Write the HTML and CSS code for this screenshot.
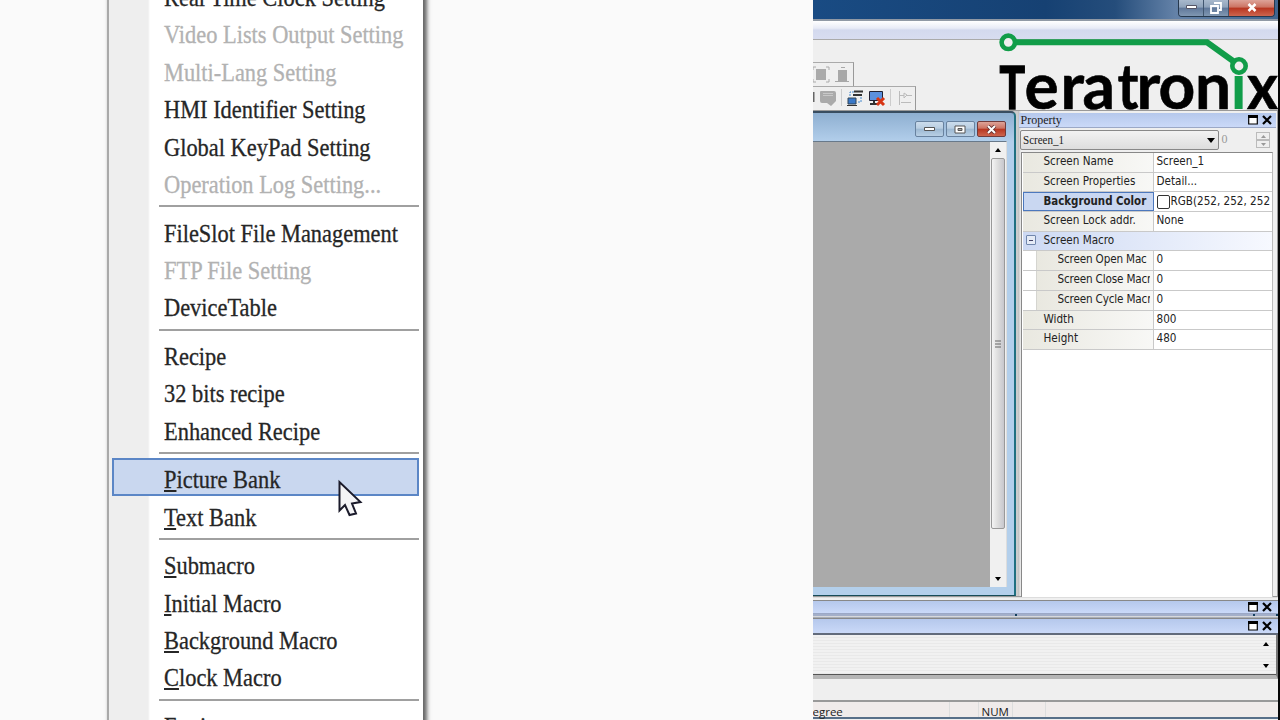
FILE: index.html
```html
<!DOCTYPE html>
<html lang="en">
<head>
    <meta charset="UTF-8">
    <title>Teratronix - Picture Bank</title>
    <link rel="stylesheet" href="styles.css">
</head>
<body>
    <!-- Icons used more than once -->
    <svg class="defs">
        <symbol id="restore" viewBox="0 0 10 10"><path d="M.7 1h8.6v8H.7z" fill="#fff" stroke="#000" stroke-width="1.2"/><path d="M0 0h10v3H0z"/></symbol>
        <symbol id="close" viewBox="0 0 10 10"><path d="M1 1l8 8M9 1L1 9" stroke="#000" stroke-width="2.2"/></symbol>
        <symbol id="up" viewBox="0 0 6 4"><path d="M0 4l3-4 3 4z"/></symbol>
        <symbol id="down" viewBox="0 0 6 4"><path d="M0 0l3 4 3-4z"/></symbol>
    </svg>

    <div class="zoom-area">
        <div class="menu">
            <div class="item"><span>Real Time Clock Setting</span></div>
            <div class="item disabled"><span>Video Lists Output Setting</span></div>
            <div class="item disabled"><span>Multi-Lang Setting</span></div>
            <div class="item"><span>HMI Identifier Setting</span></div>
            <div class="item"><span>Global KeyPad Setting</span></div>
            <div class="item disabled"><span>Operation Log Setting...</span></div>
            <div class="separator"></div>
            <div class="item"><span>FileSlot File Management</span></div>
            <div class="item disabled"><span>FTP File Setting</span></div>
            <div class="item"><span>DeviceTable</span></div>
            <div class="separator"></div>
            <div class="item"><span>Recipe</span></div>
            <div class="item"><span>32 bits recipe</span></div>
            <div class="item"><span>Enhanced Recipe</span></div>
            <div class="separator"></div>
            <div class="item selected"><span><u>P</u>icture Bank</span></div>
            <div class="item"><span><u>T</u>ext Bank</span></div>
            <div class="separator"></div>
            <div class="item"><span><u>S</u>ubmacro</span></div>
            <div class="item"><span><u>I</u>nitial Macro</span></div>
            <div class="item"><span><u>B</u>ackground Macro</span></div>
            <div class="item"><span><u>C</u>lock Macro</span></div>
            <div class="separator"></div>
            <div class="item"><span>Environment</span></div>
        </div>
        <svg class="cursor" width="27" height="40" viewBox="0 0 27 40">
            <path d="M2.500 3v28.500l5.500-5.500 4.500 10 6.500-1.500-4-10 8.500-1.500z" fill="#f4f4f6" stroke="#1b1b2b" stroke-width="2"/>
        </svg>
    </div>

    <div class="app">
        <div class="titlebar">
            <div class="window-buttons">
                <span><svg width="11" height="5"><path d="M.5.500h10v3H.5z" fill="#fff" stroke="#556"/></svg></span>
                <span><svg width="12" height="12"><path d="M4 1h7v7H9M1 4h7v7H1z" fill="none" stroke="#fff" stroke-width="1.800"/></svg></span>
                <span class="red"><svg width="10" height="9"><path d="M1.500 1l7 7M8.500 1l-7 7" stroke="#fff" stroke-width="2.500"/></svg></span>
            </div>
        </div>
        <div class="menubar"></div>
        <div class="toolbars">
            <div class="toolbar view-tools">
                <svg width="36" height="20">
                    <path d="M3 5h10v11H3z" fill="#aaa"/><path d="M0 6V3h3M13 3h3v3M0 15v3h3M13 18h3v-3" fill="none" stroke="#aaa"/>
                    <path d="M25 6h9v11h-9z" fill="#a8a8a8"/><path d="M22 17.500h15M28 3.500h4" stroke="#a8a8a8"/>
                </svg>
            </div>
            <div class="toolbar build-tools">
                <svg width="100" height="20">
                    <path d="M0 4h1.500v10H0z" fill="#666"/>
                    <path d="M7 4q0-1 1-1h13q2 0 2 2v8l-5 5-4-3H9q-2 0-2-2z" fill="#aaa"/><path d="M10 5.500h10M10 7.500h10" stroke="#c8c8c8"/>
                    <path d="M28.500 1v17M77.500 1v17" stroke="#ccc"/>
                    <path d="M41 3.500h9M40 7h9" stroke="#333" stroke-width="2"/><path d="M37 8V4h4M45 14h3V9" fill="none" stroke="#48c" stroke-dasharray="2 1"/>
                    <path d="M35 10h8v6h-8z" fill="#3978c8" stroke="#345"/><path d="M34 17.500h10" stroke="#333"/>
                    <path d="M56.500 3.500h13v9h-13z" fill="#5c91df" stroke="#223"/><path d="M57 16h9M61 13v3" stroke="#333" stroke-width="2"/><path d="M64 10l7 7M71 10l-7 7" stroke="#d73514" stroke-width="3"/>
                    <path d="M86.500 3v14M87 7.500h4M94 7.500h5M88 14.500h10M91 5v5l3-3z" fill="none" stroke="#bbb"/>
                </svg>
            </div>
        </div>

        <div class="workspace">
            <div class="child">
                <div class="child-title">
                    <span><svg width="11" height="5"><path d="M.5.500h10v3H.5z" fill="#fff" stroke="#555"/></svg></span>
                    <span><svg width="12" height="9"><path d="M1 1h10v7H1z" fill="#fff" stroke="#555"/><path d="M4 3.500h4v2H4z" fill="#aaa" stroke="#555"/></svg></span>
                    <span class="red"><svg width="11" height="9"><path d="M2 1l7 7M9 1L2 8" stroke="#633" stroke-width="3.800"/><path d="M2 1l7 7M9 1L2 8" stroke="#fff" stroke-width="2"/></svg></span>
                </div>
                <div class="child-body">
                    <div class="canvas"></div>
                    <div class="scrollbar">
                        <svg width="6" height="4"><use href="#up"/></svg>
                        <div class="thumb"><svg width="6" height="8"><path d="M0 1h6M0 4h6M0 7h6" stroke="#666"/></svg></div>
                        <svg width="6" height="4"><use href="#down"/></svg>
                    </div>
                </div>
            </div>

            <div class="property">
                <div class="caption">
                    <span>Property</span>
                    <svg width="10" height="10"><use href="#restore"/></svg>
                    <svg width="10" height="10"><use href="#close"/></svg>
                </div>
                <div class="selector">
                    <div class="combo"><span>Screen_1</span><svg width="8" height="5" viewBox="0 0 6 4" preserveAspectRatio="none"><path d="M0 0l3 4 3-4z"/></svg></div>
                    <div class="count">0</div>
                    <div class="spin">
                        <span><svg width="5" height="3"><path d="M0 3l2.500-3L5 3z" fill="#999"/></svg></span>
                        <span><svg width="5" height="3"><path d="M0 0l2.500 3L5 0z" fill="#999"/></svg></span>
                    </div>
                </div>
                <div class="grid">
                    <div class="row"><label>Screen Name</label><div>Screen_1</div></div>
                    <div class="row"><label>Screen Properties</label><div>Detail...</div></div>
                    <div class="row active"><label>Background Color</label><div><i class="swatch"></i>RGB(252, 252, 252</div></div>
                    <div class="row"><label>Screen Lock addr.</label><div>None</div></div>
                    <div class="row group"><i class="minus"></i>Screen Macro</div>
                    <div class="row sub"><label><span>Screen Open Mac</span></label><div>0</div></div>
                    <div class="row sub"><label><span>Screen Close Macr</span></label><div>0</div></div>
                    <div class="row sub"><label><span>Screen Cycle Macr</span></label><div>0</div></div>
                    <div class="row"><label>Width</label><div>800</div></div>
                    <div class="row"><label>Height</label><div>480</div></div>
                </div>
            </div>
        </div>

        <div class="dock">
            <div class="caption dock-caption">
                <svg width="10" height="10"><use href="#restore"/></svg>
                <svg width="10" height="10"><use href="#close"/></svg>
            </div>
            <div class="splitter"><i></i><i></i><i></i></div>
            <div class="caption dock-caption output-caption">
                <svg width="10" height="10"><use href="#restore"/></svg>
                <svg width="10" height="10"><use href="#close"/></svg>
            </div>
            <div class="output">
                <svg width="6" height="4"><use href="#up"/></svg>
                <svg width="6" height="4"><use href="#down"/></svg>
            </div>
        </div>
        <div class="statusbar">
            <span class="degree">egree</span><span></span><span class="num">NUM</span><span class="gap"></span>
        </div>

        <svg class="logo" width="280" height="80" viewBox="1000 30 280 80">
            <text y="109" x="999.5 1024.500 1060.500 1082.500 1117.500 1136.500 1158.500 1195 1230.500 1247"><tspan class="cap" textLength="25.500" lengthAdjust="spacingAndGlyphs">T</tspan>era<tspan textLength="21" lengthAdjust="spacingAndGlyphs">t</tspan>ron<tspan class="green">i</tspan><tspan textLength="31" lengthAdjust="spacingAndGlyphs">x</tspan></text>
            <path d="M1008 42.300h199l32 23" fill="none" stroke="#119d49" stroke-width="6"/>
            <circle cx="1008.300" cy="42.300" r="6.700"/>
            <circle cx="1239" cy="66" r="6.700"/>
        </svg>
    </div>
</body>
</html>
```

FILE: styles.css
```css
* {
    box-sizing: border-box;
}
body {
    margin: 0;
    width: 1280px;
    height: 720px;
    overflow: hidden;
    display: flex;
    background: #fafafa;
    font-family: "DejaVu Sans Condensed", "DejaVu Sans", sans-serif;
    color: #222;
}
svg {
    display: block;
    flex: none;
}
.defs {
    position: absolute;
    width: 0;
    height: 0;
}

/* Enlarged menu */
.zoom-area {
    position: relative;
    width: 812.5px;
    height: 720px;
    flex: none;
    overflow: hidden;
    padding-left: 107px;
}
.menu {
    width: 316px;
    height: 760px;
    margin-top: -24px;
    padding: 0 4px 0 4px;
    border-left: 2px solid #a9a9a9;
    background: linear-gradient(90deg, #eee 39px, #fff 41px);
    box-shadow: 3px 0 4px 1px #666;
}
.item {
    height: 37.4px;
    padding-left: 51px;
    font: 25px/43px "Liberation Serif", serif;
    white-space: nowrap;
    color: #262626;
}
.item span {
    display: inline-block;
    transform: scaleX(.896);
    transform-origin: left;
    -webkit-text-stroke: .3px;
}
.item u {
    text-decoration-thickness: 2px;
    text-underline-offset: 2px;
}
.disabled {
    color: #b2b2b2;
}
.selected {
    margin-left: -1px;
    padding-left: 50px;
    border: 2px solid #5b86c6;
    background: #c9d7ef;
    line-height: 39px;
}
.separator {
    height: 11.2px;
    margin-left: 46px;
    background: linear-gradient(#a0a0a0, #a0a0a0) 0 5px / 100% 2px no-repeat;
}
.cursor {
    position: absolute;
    left: 337px;
    top: 479px;
}

/* Application */
.app {
    position: relative;
    flex: 1;
    height: 720px;
    display: flex;
    flex-direction: column;
    border-right: 2.5px solid #050505;
    background: #efefef;
    overflow: hidden;
}
.titlebar {
    height: 19px;
    flex: none;
    display: flex;
    justify-content: flex-end;
    padding-right: 3px;
    background: linear-gradient(90deg, #194b83, #164173 50%, #254d7b 65%, #6482a8 78%, #40658f);
}
.window-buttons {
    display: flex;
    height: 17px;
    border: 1px solid #27394e;
    border-top: 0;
    border-radius: 0 0 4px 4px;
    overflow: hidden;
}
.window-buttons span, .child-title span {
    display: flex;
    align-items: center;
    justify-content: center;
    background: linear-gradient(#a8b9cd, #8fa3bb 45%, #60789a 50%, #8097b2);
}
.window-buttons span {
    width: 25px;
    padding-bottom: 1px;
    border-right: 1px solid #41566f;
}
.window-buttons .red {
    width: 45px;
    border: 0;
}
.window-buttons .red, .child-title .red {
    background: linear-gradient(#dda398, #cc7362 45%, #b73520 50%, #cd654e);
}
.menubar {
    height: 21px;
    flex: none;
    border-top: 2px solid #9099a5;
    border-bottom: 1px solid #aaa;
    background: linear-gradient(#fff, #e8ebf6 40%, #d3d9ee 50%, #d8ddf0);
}
.toolbars {
    height: 71px;
    flex: none;
    padding-top: 22px;
    border-bottom: 1px solid #999;
}
.toolbar {
    height: 24px;
    border-top: 1px solid #aaa;
    border-right: 1px solid #999;
    padding-top: 1px;
}
.view-tools {
    width: 41px;
}
.build-tools {
    width: 103px;
}
.workspace {
    height: 486px;
    flex: none;
    display: flex;
    border-bottom: 1px solid #999;
    background: #ccc;
}
.child {
    width: 203px;
    height: 485px;
    padding: 0 7px 8px 0;
    border-right: 2px solid #207080;
    border-bottom: 1px solid #164b58;
    border-top: 2px solid #394d60;
    border-top-right-radius: 5px;
    background: linear-gradient(#8eafd1, #b3cfeb 29px, #b3cfeb);
}
.child-title {
    height: 28px;
    display: flex;
    justify-content: flex-end;
    gap: 2px;
    padding: 8px 1px 4px 0;
}
.child-title span {
    width: 29px;
    border: 1px solid #68829f;
    border-radius: 2px;
    background: linear-gradient(#cbdcec, #b9cee2 45%, #9cb8d2 50%, #b8cfe4);
}
.child-title .red {
    border-color: #713b3b;
}
.child-body {
    height: 446px;
    display: flex;
    border-top: 1px solid #68798a;
    border-right: 1px solid #ddd;
}
.canvas {
    flex: 1;
    background: #aaa;
}
.scrollbar {
    width: 16px;
    display: flex;
    flex-direction: column;
    align-items: center;
    justify-content: space-between;
    padding: 6px 0 6px;
    background: #f0f0f0;
}
.thumb {
    width: 14px;
    height: 371px;
    margin-bottom: 42px;
    display: flex;
    align-items: center;
    justify-content: center;
    border: 1px solid #999;
    border-radius: 2px;
    background: linear-gradient(90deg, #f4f4f4, #ddd 50%, #c7c7cd);
}

/* Property panel */
.property {
    flex: 1;
    min-width: 0;
    margin-left: 2px;
    padding: 2px 4px 0 3px;
    background: linear-gradient(90deg, #bbb, #efefef 3px);
    border-right: 1px solid #999;
}
.caption {
    height: 15px;
    margin: 0 -3px 0 -2px;
    padding-right: 4px;
    display: flex;
    align-items: center;
    gap: 4px;
    border-bottom: 1px solid #9ba8c6;
    background: linear-gradient(#b5c8ec, #cad9f8);
}
.caption span {
    flex: 1;
    padding-left: 2px;
    font: 12px/14px "Liberation Serif", serif;
}
.selector {
    height: 24px;
    padding-top: 2px;
    display: flex;
    font: 12px/18px "Liberation Serif", serif;
}
.combo {
    width: 199px;
    height: 20px;
    margin-left: -1px;
    padding: 0 3px 0 2px;
    display: flex;
    align-items: center;
    border: 1px solid #888;
    border-radius: 2px;
    background: linear-gradient(#f2f2f2, #ddd);
}
.combo span {
    flex: 1;
    transform: scaleX(.92);
    transform-origin: left;
}
.count {
    flex: 1;
    padding-left: 3px;
    color: #999;
}
.spin {
    width: 14px;
    margin: 2px 3px 4px 0;
}
.spin span {
    height: 8px;
    display: flex;
    align-items: center;
    justify-content: center;
    border: 1px solid #bbb;
}
.grid {
    height: 446px;
    padding-left: 1px;
    border-top: 1px solid #888;
    border-left: 1px solid #888;
    border-right: 1px solid #bbb;
    background: #fff;
    font-size: 11.6px;
    line-height: 17px;
    white-space: nowrap;
}
.row {
    height: 19.7px;
    display: flex;
    border-bottom: 1px solid #c9c9c9;
}
.row label {
    width: 131px;
    padding-left: 21px;
    overflow: hidden;
    border-right: 1px solid #c9c9c9;
    background: linear-gradient(90deg, #e9e8e0, #f8f8f6);
}
.row div {
    flex: 1;
    min-width: 0;
    padding-left: 3px;
    overflow: hidden;
}
.active label {
    border: 1px solid #4c78bd;
    padding-left: 20px;
    line-height: 16px;
    font-weight: bold;
    font-size: 11.4px;
    background: #c9d7f1;
}
.active div {
    display: flex;
    align-items: center;
}
.swatch {
    width: 13px;
    height: 14px;
    flex: none;
    margin-right: 1px;
    border: 1px solid #333;
    border-radius: 2px;
}
.group {
    background: linear-gradient(90deg, #cdd9f3, #f7f9ff);
}
.minus {
    width: 10px;
    height: 10px;
    margin: 3px 8px 0 3px;
    border: 1px solid #7187ad;
    border-radius: 1px;
    background: linear-gradient(#446, #446) 2px 4px / 4px 1px no-repeat #e5ebf6;
}
.sub label {
    width: 118px;
    margin-left: 13px;
    padding-left: 21px;
    border-left: 1px solid #d5d5d0;
}
.sub label span {
    display: block;
    width: 92px;
    overflow: hidden;
    letter-spacing: -.15px;
}

/* Bottom panes */
.dock {
    height: 104px;
    flex: none;
    padding-top: 2px;
    border-top: 1px solid #ddd;
    border-bottom: 1px solid #999;
}
.dock-caption {
    height: 14px;
    margin: 0;
    padding-right: 6px;
    justify-content: flex-end;
    border-top: 1px solid #888;
}
.splitter {
    height: 4px;
    display: flex;
    justify-content: space-between;
    padding: 0 0 0 202px;
    background: linear-gradient(#a3afc9 2px, #eee 2px, #9299a5);
}
.splitter i {
    width: 2px;
    height: 2px;
    background: #154060;
}
.splitter i:nth-child(2) {
    margin-left: 216px;
}
.output-caption {
    height: 17px;
    border-bottom: 2px solid #626b7b;
}
.output {
    height: 44px;
    display: flex;
    flex-direction: column;
    align-items: flex-end;
    justify-content: space-between;
    padding: 7px 7px 7px 0;
    border-right: 2px solid #777;
    border-bottom: 4px solid #b5b5b5;
    box-shadow: inset 0 -1px #555;
    background: repeating-linear-gradient(#f1f1f1 0 2px, #e9e9e9 2px 3px);
}
.statusbar {
    height: 18px;
    flex: none;
    display: flex;
    border-top: 1px solid #999;
    border-bottom: 2px solid #586f88;
    background: #f0ebea;
    font: 11.5px/20px "Open Sans", sans-serif;
}
.statusbar span {
    width: 29px;
    border-right: 1px solid #ddd;
}
.statusbar .degree {
    width: 137px;
}
.statusbar .num {
    width: 34px;
    padding-left: 3px;
}
.statusbar .gap {
    width: 33px;
}
.logo {
    position: absolute;
    left: 187.5px;
    top: 30px;
    overflow: visible;
}
.logo text {
    font: bold 64px Lato, sans-serif;
    fill: #000;
    stroke: #000;
    stroke-width: .6px;
}
.logo .cap {
    font-size: 60px;
    stroke-width: 1.6px;
}
.logo .green {
    fill: #119d49;
    stroke: none;
}
.logo circle {
    fill: #efefef;
    stroke: #119d49;
    stroke-width: 4.6;
}
```
